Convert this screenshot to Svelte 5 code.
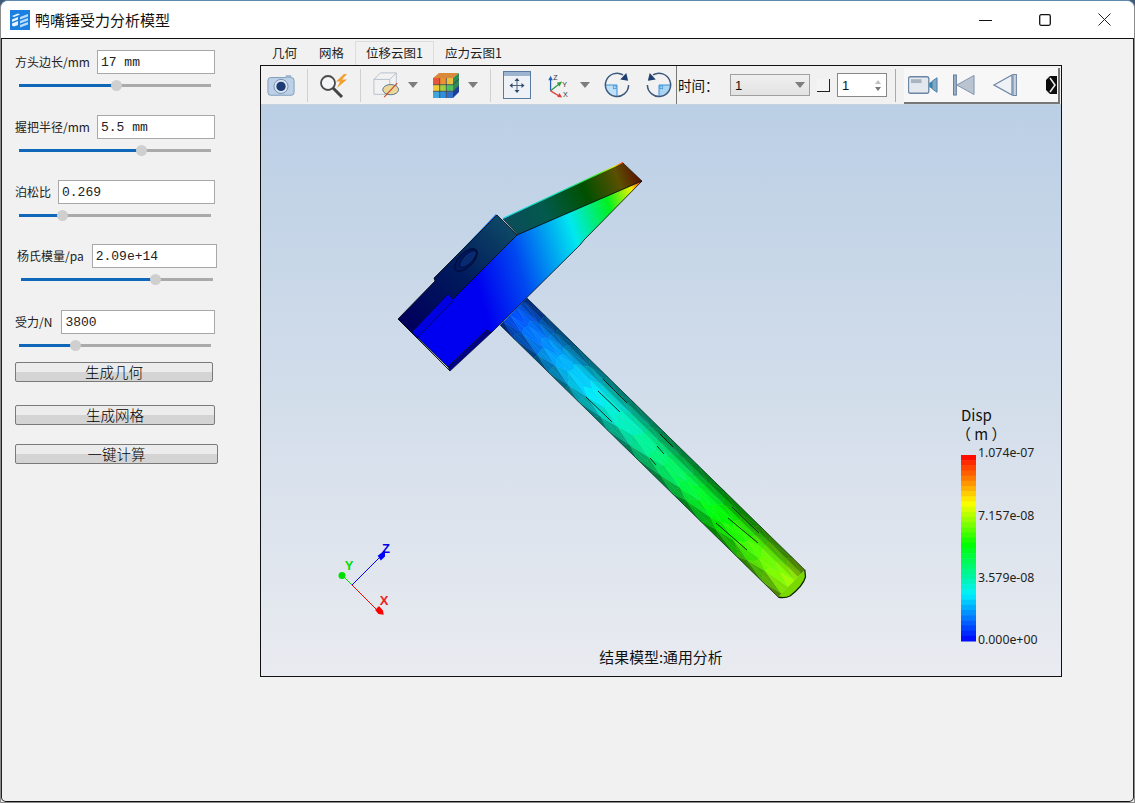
<script lang="ts">
	// colour ramp taken off the legend bar
	const ramp = [
		[0, [0, 0, 255]],
		[0.25, [0, 240, 255]],
		[0.52, [0, 255, 0]],
		[0.74, [255, 255, 0]],
		[1, [255, 0, 0]]
	] as const;

	function colorAt(v: number, shade = 1): string {
		const x = Math.min(1, Math.max(0, v));
		for (let i = 1; i < ramp.length; i++) {
			const [p1, c1] = ramp[i];
			const [p0, c0] = ramp[i - 1];
			if (x <= p1) {
				const k = (x - p0) / (p1 - p0);
				const rgb = c0.map((c, n) => Math.round((c + (c1[n] - c) * k) * shade));
				return `rgb(${rgb.join(',')})`;
			}
		}
		return 'rgb(255,0,0)';
	}

	const fields = [
		{ label: '方头边长/mm', value: '17 mm', pct: 50.5, cls: 'f1' },
		{ label: '握把半径/mm', value: '5.5 mm', pct: 63.5, cls: 'f2' },
		{ label: '泊松比', value: '0.269', pct: 22.5, cls: 'f3' },
		{ label: '杨氏模量/pa', value: '2.09e+14', pct: 70, cls: 'f4' },
		{ label: '受力/N', value: '3800', pct: 29, cls: 'f5' }
	];

	const tabs = ['几何', '网格', '位移云图1', '应力云图1'];

	const bands = Array.from({ length: 36 }, (_, i) => colorAt(1 - (i + 0.5) / 36));

	const legend = [
		{ y: 457, text: '1.074e-07' },
		{ y: 520, text: '7.157e-08' },
		{ y: 582, text: '3.579e-08' },
		{ y: 644, text: '0.000e+00' }
	];

	// handle mesh: triangles laid along the axis, shaded darker at the rims
	const A = { x: 513.5, y: 311.5 };
	const B = { x: 791.5, y: 583.5 };
	const halfW = 19;
	function rand(i: number, j: number): number {
		const s = Math.sin(i * 127.1 + j * 311.7) * 43758.5453;
		return s - Math.floor(s);
	}
	function meshPoint(i: number, j: number, cols: number, rows: number) {
		const jitterS = i > 0 && i < cols ? (rand(i, j) - 0.5) * 0.035 : 0;
		const s = i / cols + jitterS;
		const t = j / rows;
		const w = (t * 2 - 1) * halfW;
		return {
			x: A.x + (B.x - A.x) * s + 0.7 * w,
			y: A.y + (B.y - A.y) * s - 0.715 * w,
			s,
			t
		};
	}
	function rimShade(rim: number): number {
		if (rim > 0.8) return 0.52;
		if (rim > 0.55) return 0.7;
		if (rim > 0.3) return 0.9;
		return 1;
	}
	function buildHandle() {
		const cols = 18;
		const rows = 8;
		const out: { points: string; fill: string }[] = [];
		for (let i = 0; i < cols; i++) {
			for (let j = 0; j < rows; j++) {
				const a = meshPoint(i, j, cols, rows);
				const b = meshPoint(i + 1, j, cols, rows);
				const c = meshPoint(i + 1, j + 1, cols, rows);
				const d = meshPoint(i, j + 1, cols, rows);
				const tris = (i + j) % 2 ? [[a, b, c], [a, c, d]] : [[a, b, d], [b, c, d]];
				tris.forEach((tri, n) => {
					const s = (tri[0].s + tri[1].s + tri[2].s) / 3;
					const t = (tri[0].t + tri[1].t + tri[2].t) / 3;
					const rim = Math.abs(t - 0.46) * 2;
					const shade = rimShade(rim) * (0.98 + rand(i + n, j) * 0.02);
					out.push({
						points: tri.map((p) => `${p.x.toFixed(1)},${p.y.toFixed(1)}`).join(' '),
						fill: colorAt(0.08 + s * 0.58 + (rand(i, j + n) - 0.5) * 0.012, shade)
					});
				});
			}
		}
		return out;
	}
	const facets = buildHandle();

	const cubeCells = [
		['#e8553a', '#f09030', '#e8c040'],
		['#f0c838', '#a0d040', '#50c060'],
		['#40a8d8', '#3090e0', '#3070c8']
	];
</script>

<div class="window">
	<header class="titlebar">
		<svg class="app-icon" width="20" height="20" viewBox="0 0 20 20">
			<rect width="20" height="20" fill="#1a7fe0" />
			<path d="M2 6 8 3.5 10 4.5 4 7ZM2 9.5 8 7V9.5L2 12ZM2 13.5 8 11V15L4 16.5 2 15.5Z" fill="#eaf4fd" />
			<path d="M10 7 18 4V6.5L10 9.5ZM10 11 18 8V10.5L10 13.5ZM10 15 18 12V14.5L10 17.5Z" fill="#b9dcf8" />
		</svg>
		<span class="title">鸭嘴锤受力分析模型</span>
		<div class="win-controls">
			<svg width="13" height="12" viewBox="0 0 13 12"><path d="M0 6.5H13" stroke="#111" stroke-width="1" /></svg>
			<svg width="12" height="12" viewBox="0 0 12 12"><rect x="0.7" y="0.7" width="10.6" height="10.6" rx="1.5" fill="none" stroke="#111" stroke-width="1.3" /></svg>
			<svg width="13" height="13" viewBox="0 0 13 13"><path d="M0.5 0.5 12.5 12.5M12.5 0.5 0.5 12.5" stroke="#222" stroke-width="1" /></svg>
		</div>
	</header>

	<main class="body">
		<aside class="panel">
			{#each fields as f}
				<section class="field {f.cls}">
					<div class="field-row">
						<label class="field-label" for={f.cls}>{f.label}</label>
						<input id={f.cls} class="field-input" value={f.value} readonly />
					</div>
					<div class="slider">
						<div class="slider-fill" style="width: {f.pct}%"></div>
						<div class="slider-thumb" style="left: {f.pct}%"></div>
					</div>
				</section>
			{/each}
			<button class="act a1">生成几何</button>
			<button class="act a2">生成网格</button>
			<button class="act a3">一键计算</button>
		</aside>

		<section class="workspace">
			<nav class="tabs">
				{#each tabs as t, i}
					<div class="tab" class:active={i === 2}>{t}</div>
				{/each}
			</nav>
			<div class="frame">
				<div class="toolbar">
					<svg class="tool" width="28" height="24" viewBox="0 0 30 24">
						<rect x="1" y="4" width="28" height="19" rx="3" fill="#bcd0e6" stroke="#7d9abb" />
						<rect x="20" y="1.5" width="6" height="3" fill="#9ab4d0" />
						<circle cx="15" cy="13.5" r="7.5" fill="#dfe8f2" stroke="#6f8db0" />
						<circle cx="15" cy="13.5" r="5" fill="#1e3d74" />
					</svg>
					<i class="sep s1"></i>
					<svg class="tool" width="28" height="26" viewBox="0 0 28 26">
						<circle cx="8" cy="11" r="7" fill="#f4f6f8" stroke="#4a4a4a" stroke-width="1.8" />
						<path d="M13 16 22 25" stroke="#444" stroke-width="3" />
						<path d="M24 2 16 9.5H20L17 16 27 7.5H22L27 2Z" fill="#f0a030" />
					</svg>
					<i class="sep s2"></i>
					<svg class="tool" width="27" height="28" viewBox="0 0 29 28">
						<path d="M1 8 8 1H25V17L18 24H1Z" fill="#f2f2f2" stroke="#b4bdc8" />
						<path d="M1 8H18V24M18 8 25 1" fill="none" stroke="#b4bdc8" />
						<ellipse cx="19" cy="19" rx="8.5" ry="5.5" fill="#ecd79a" stroke="#51708f" />
						<path d="M12 27 26 12" stroke="#c8502a" stroke-width="1.3" />
					</svg>
					<i class="caret c1"></i>
					<svg class="tool" width="28" height="28" viewBox="0 0 28 28">
						<path d="M7 2H27L21 7H1Z" fill="#d88a3a" />
						<path d="M21 7 27 2V8L21 13.7ZM21 13.7 27 8V14.5L21 20.3Z" fill="#2f8a5a" />
						<path d="M21 20.3 27 14.5V21L21 27Z" fill="#1c3f9a" />
						{#each cubeCells as row, r}
							{#each row as c, k}
								<rect x={1 + k * 6.67} y={7 + r * 6.67} width="6.67" height="6.67" fill={c} />
							{/each}
						{/each}
						<path d="M7.7 7V27M14.3 7V27M1 13.7H21M1 20.3H21M21 13.7 27 8M21 20.3 27 14.5" stroke="#36404a" stroke-width="0.8" fill="none" />
					</svg>
					<i class="caret c2"></i>
					<i class="sep s3"></i>
					<svg class="tool" width="28" height="28" viewBox="0 0 28 28">
						<rect x="0.5" y="0.5" width="27" height="27" fill="#eef2f7" stroke="#5a7aa0" />
						<rect x="1" y="1" width="26" height="4" fill="#9db4d0" />
						<path d="M14 8V21M7.5 14.5H20.5" stroke="#49637f" />
						<path d="M14 7 11.5 10H16.5ZM14 22 11.5 19H16.5ZM6.5 14.5 9.5 12V17ZM21.5 14.5 18.5 12V17Z" fill="#2f4a6a" />
					</svg>
					<svg class="tool t-axes" width="25" height="25" viewBox="0 0 28 28">
						<path d="M4 20V7" stroke="#2460b8" stroke-width="1.4" />
						<path d="M4 3 1.5 8H6.5Z" fill="#2460b8" />
						<path d="M4 20 14 12" stroke="#2f9a40" stroke-width="1.4" />
						<path d="M17 9.5 11 11 14 15Z" fill="#2f9a40" />
						<path d="M4 20 14 26" stroke="#e03c3c" stroke-width="1.4" />
						<path d="M17 27.5 11.5 27 14 22.5Z" fill="#e03c3c" />
						<text x="7" y="7.5" class="axis-mini">Z</text>
						<text x="17" y="15.5" class="axis-mini">Y</text>
						<text x="18" y="26.5" class="axis-mini">X</text>
					</svg>
					<i class="caret c3"></i>
					<svg class="tool" width="26" height="26" viewBox="0 0 28 28">
						<path d="M14 14V26.5A12.5 12.5 0 0 1 1.5 14Z" fill="#bfe0f6" />
						<path d="M1.5 14H14V26.5" stroke="#2f8bd8" fill="none" />
						<rect x="10" y="15" width="3" height="3" fill="none" stroke="#2f8bd8" stroke-width="0.7" />
						<path d="M20.5 3.2A12.5 12.5 0 1 0 26.5 14" fill="none" stroke="#3c587c" stroke-width="1.6" />
						<path d="M26 9.5 17.5 8 24 1Z" fill="#1f3f70" />
					</svg>
					<svg class="tool t-rot2" width="26" height="26" viewBox="0 0 28 28">
						<path d="M14 14V26.5A12.5 12.5 0 0 0 26.5 14Z" fill="#a9d4f2" />
						<path d="M26.5 14H14V26.5" stroke="#2f8bd8" fill="none" />
						<rect x="15" y="15" width="3" height="3" fill="none" stroke="#2f8bd8" stroke-width="0.7" />
						<path d="M7.5 3.2A12.5 12.5 0 1 1 1.5 14" fill="none" stroke="#3c587c" stroke-width="1.6" />
						<path d="M2 9.5 10.5 8 4 1Z" fill="#1f3f70" />
					</svg>
					<i class="divider"></i>
					<span class="time-label">时间：</span>
					<div class="combo">
						<span>1</span>
						<i class="combo-arrow"></i>
					</div>
					<i class="check"></i>
					<div class="spin">
						<span>1</span>
						<div class="spin-arrows"><i class="up"></i><i class="down"></i></div>
					</div>
					<i class="sep s4"></i>
					<div class="player">
						<svg width="30" height="20" viewBox="0 0 31 20">
							<rect x="0.5" y="1.5" width="21" height="17" rx="2" fill="#e3e8ee" stroke="#6d86a3" stroke-width="1.4" />
							<rect x="3" y="4" width="11" height="4" fill="#a9b4c0" />
							<path d="M22 8 25 6V14L22 12Z" fill="#2d86b5" />
							<path d="M25 6 30 2.5V17.5L25 14Z" fill="#7fa8c4" stroke="#4c7fa6" />
						</svg>
						<svg class="p-first" width="22" height="22" viewBox="0 0 23 22">
							<rect x="0.5" y="0.5" width="3" height="21" fill="#9db0c6" stroke="#5f7c9f" />
							<path d="M4 11 22 1V21Z" fill="#b9c4d0" stroke="#7d93ac" />
						</svg>
						<svg class="p-prev" width="24" height="22" viewBox="0 0 24 22">
							<path d="M1 11 19 1V21Z" fill="#eef1f5" stroke="#6d86a3" stroke-width="1.2" />
							<rect x="20" y="0.5" width="3.4" height="21" fill="#c9d3df" stroke="#6d86a3" />
						</svg>
						<svg class="p-more" width="11" height="18" viewBox="0 0 11 18">
							<rect width="11" height="18" fill="#0c0c0c" />
							<path d="M0 0H4L0 4ZM0 18H4L0 14Z" fill="#f0f0f0" />
							<path d="M4 2 9 9 4 16" fill="none" stroke="#e8e8e8" stroke-width="1.6" />
						</svg>
					</div>
				</div>

				<div class="viewport">
					<svg class="scene" width="800" height="571" viewBox="261 105 800 571">
						<defs>
							<linearGradient id="faceMain" gradientUnits="userSpaceOnUse" x1="480" y1="293" x2="660" y2="239">
								<stop offset="0" stop-color="#0000f0" />
								<stop offset="0.24" stop-color="#0048f0" />
								<stop offset="0.57" stop-color="#00e8f0" />
								<stop offset="0.79" stop-color="#00f020" />
								<stop offset="0.93" stop-color="#f0f000" />
								<stop offset="1" stop-color="#ff2000" />
							</linearGradient>
							<linearGradient id="faceTop" gradientUnits="userSpaceOnUse" x1="503" y1="225" x2="640" y2="170">
								<stop offset="0" stop-color="#0c4a5c" />
								<stop offset="0.3" stop-color="#025a4c" />
								<stop offset="0.6" stop-color="#005000" />
								<stop offset="0.84" stop-color="#5a5000" />
								<stop offset="1" stop-color="#5c0a00" />
							</linearGradient>
							<linearGradient id="topEdge" gradientUnits="userSpaceOnUse" x1="503" y1="219" x2="623" y2="163">
								<stop offset="0" stop-color="#00d8f0" />
								<stop offset="0.55" stop-color="#00e8a0" />
								<stop offset="0.8" stop-color="#40f000" />
								<stop offset="0.93" stop-color="#f0f000" />
								<stop offset="1" stop-color="#ff3000" />
							</linearGradient>
							<linearGradient id="faceSide" gradientUnits="userSpaceOnUse" x1="410" y1="325" x2="512" y2="225">
								<stop offset="0" stop-color="#00005c" />
								<stop offset="0.5" stop-color="#001a5c" />
								<stop offset="1" stop-color="#0e4a66" />
							</linearGradient>
						</defs>

						<!-- handle -->
						{#each facets as f}
							<polygon points={f.points} fill={f.fill} stroke={f.fill} stroke-width="0.4" />
						{/each}
						<path d="M804.8 569.9 805.5 577Q803 586 790 596 785 598.5 778.2 597.1" fill="#78d800" stroke="#102000" stroke-width="1.2" />
						<path d="M526.8 297.9 804.8 569.9M500.2 325.1 778.2 597.1" fill="none" stroke="#06201c" stroke-width="0.8" opacity="0.8" />
						<path d="M603 379 627 403M598 391 620 412M586 397 607 417 612 422M660 434 673 447M657 446 664 454M650 458 656 465M732 507 759 533M728 518 758 543M716 523 747 550"
							fill="none" stroke="#04140a" stroke-width="0.9" />

						<!-- head -->
						<polygon points="434,279 496,214 498,217 438,282" fill="#0a6ee0" />
						<polygon points="503,219 623,163 642,181 518,235" fill="url(#faceTop)" stroke="#08140c" stroke-width="0.6" />
						<path d="M503 218.5 623 162.5" stroke="url(#topEdge)" stroke-width="1.2" />
						<polygon points="517,235 642,181 584,240 580,245 491,333 487,330 448,367 412,332" fill="url(#faceMain)" stroke="#04080c" stroke-width="0.8" />
						<polygon points="398,319 435,281 434,278 497,215 517,235 416,336 411,332" fill="url(#faceSide)" stroke="#04080c" stroke-width="0.8" />
						<polygon points="412,332 448,294 454,300 417,338" fill="#0000e0" stroke="#020a30" stroke-width="0.7" />
						<polygon points="487,330 491,333 450,371 448,367" fill="#000088" stroke="#04080c" stroke-width="0.6" />
						<path d="M398 319 450 371" fill="none" stroke="#04080c" stroke-width="0.9" />
						<ellipse cx="466" cy="260" rx="14.5" ry="7" transform="rotate(-45 466 260)" fill="#02185e" stroke="#01062a" stroke-width="0.9" />
						<ellipse cx="468" cy="259" rx="11" ry="4.5" transform="rotate(-45 468 259)" fill="#072a70" stroke="#01062a" stroke-width="0.7" />

						<!-- triad -->
						<path d="M352 585 382 555" stroke="#0000ff" stroke-width="1" />
						<path d="M352 585 342 575" stroke="#00e000" stroke-width="1" />
						<path d="M352 585 377 610" stroke="#ff0000" stroke-width="1" />
						<circle cx="342" cy="575.5" r="3.5" fill="#00e000" />
						<path d="M379 556 384 552 384 556 381 559Z" fill="#0000ff" stroke="#0000ff" stroke-width="2" />
						<path d="M376.5 610 379 607.5 382 611 382.5 613.5 379 613Z" fill="#ff0000" stroke="#ff0000" stroke-width="2" />
						<text x="349" y="570" class="triad" fill="#00e000" text-anchor="middle">Y</text>
						<text x="386" y="553" class="triad" fill="#0000e8" text-anchor="middle">Z</text>
						<text x="384" y="605" class="triad" fill="#f02020" text-anchor="middle">X</text>

						<!-- legend -->
						<text x="961" y="421" class="legend-title">Disp</text>
						<text x="956" y="440" class="legend-title">（ m ）</text>
						{#each bands as c, i}
							<rect x="961" y={455 + i * (186 / 36)} width="15" height={186 / 36 + 0.5} fill={c} />
						{/each}
						{#each legend as l}
							<text x="978" y={l.y} class="legend-val">{l.text}</text>
						{/each}

						<text x="661" y="663" class="caption" text-anchor="middle">结果模型:通用分析</text>
					</svg>
				</div>
			</div>
		</section>
	</main>
</div>

<style>
	:global(body) {
		background: #3f5a78;
		overflow: hidden;
	}

	.window {
		width: 1135px;
		height: 803px;
		box-sizing: border-box;
		border-top: 1px solid #5f88ae;
		border-left: 1px solid #8c8c8c;
		border-right: 1px solid #8c8c8c;
		border-bottom: 1px solid #8c8c8c;
		border-radius: 8px 8px 0 0;
		display: flex;
		flex-direction: column;
		overflow: hidden;
		background: #f1f1f1;
		font-family: 'Noto Sans CJK SC', 'Noto Sans', sans-serif;
		color: #111;
	}

	.titlebar {
		height: 37px;
		flex-shrink: 0;
		background: #fff;
		border-bottom: 1px solid #111;
		display: flex;
		align-items: center;
		padding-left: 9px;
	}

	.app-icon {
		margin-right: 5px;
	}

	.title {
		font-size: 15px;
	}

	.win-controls {
		margin-left: auto;
		display: flex;
		align-items: center;
		margin-right: 23px;
		gap: 47px;
	}

	.body {
		flex: 1;
		display: flex;
		box-sizing: border-box;
		border-left: 1px solid #222;
		border-right: 1px solid #222;
		border-bottom: 1px solid #111;
		border-radius: 0 0 5px 5px;
	}

	.panel {
		width: 258px;
		flex-shrink: 0;
		box-sizing: border-box;
		padding: 11px 0 0 13px;
		display: flex;
		flex-direction: column;
		align-items: flex-start;
	}

	.field {
		width: 200px;
		height: 65px;
	}

	.field.f3 {
		height: 64px;
	}

	.field.f4 {
		height: 66px;
		padding-left: 2px;
	}

	.field.f5 {
		height: 52px;
	}

	.field-row {
		display: flex;
		align-items: center;
		height: 24px;
	}

	.field-label {
		font-size: 12px;
		white-space: nowrap;
		color: #222;
		padding-bottom: 2px;
	}

	.field-input {
		flex: 1;
		min-width: 0;
		box-sizing: border-box;
		height: 24px;
		margin-left: 7px;
		padding: 0 3px;
		background: #fff;
		border: 1px solid #a8a8a8;
		border-radius: 0;
		outline: none;
		font-family: 'Liberation Mono', 'Noto Sans CJK SC', monospace;
		font-size: 13px;
		color: #222;
	}

	.f4 .field-input {
		margin-left: 8px;
	}

	.f5 .field-input {
		margin-left: 9px;
	}

	.slider {
		position: relative;
		width: 192px;
		height: 3px;
		margin: 10px 0 0 4px;
		background: #aaa;
	}

	.slider-fill {
		height: 3px;
		background: #0f67b8;
	}

	.slider-thumb {
		position: absolute;
		top: -4px;
		width: 11px;
		height: 11px;
		margin-left: -5px;
		border-radius: 50%;
		background: #cfcfcf;
	}

	.act {
		box-sizing: border-box;
		height: 20px;
		padding: 0 0 2px;
		border: 1px solid #7a7a7a;
		border-radius: 2px;
		background: linear-gradient(#ececec 0 50%, #d4d4d4 50% 100%);
		font-family: 'Noto Sans CJK SC', sans-serif;
		font-size: 14.5px;
		line-height: 15px;
		font-weight: 300;
		color: #000;
	}

	.a1 {
		width: 198px;
		margin-bottom: 23px;
	}

	.a2 {
		width: 200px;
		margin-bottom: 19px;
	}

	.a3 {
		width: 203px;
	}

	.workspace {
		display: flex;
		flex-direction: column;
		padding-top: 2px;
	}

	.tabs {
		display: flex;
		height: 24px;
		padding-left: 1px;
		box-sizing: border-box;
		font-size: 12.5px;
	}

	.tab {
		padding: 3px 11px 0;
		white-space: nowrap;
		color: #222;
		line-height: 18px;
	}

	.tab.active {
		background: #f1f1f1;
		border: 1px solid #dcdcdc;
		border-bottom: 0;
		padding: 2px 10px 0;
	}

	.frame {
		width: 802px;
		height: 612px;
		box-sizing: border-box;
		border: 1px solid #111;
		display: flex;
		flex-direction: column;
	}

	.toolbar {
		height: 39px;
		flex-shrink: 0;
		display: flex;
		align-items: center;
		background: #f1f1f1;
		border-bottom: 1px solid #c8d2de;
		box-sizing: border-box;
		padding-left: 6px;
	}

	.tool {
		flex-shrink: 0;
	}

	.sep {
		flex-shrink: 0;
		width: 1px;
		height: 33px;
		background: #d0d0d0;
	}

	.s1,
	.s2,
	.s3 {
		margin: 0 12px;
	}

	.s4 {
		margin: 0 8px;
		background: #aaa;
	}

	.caret {
		flex-shrink: 0;
		width: 0;
		height: 0;
		border-left: 5px solid transparent;
		border-right: 5px solid transparent;
		border-top: 6px solid #7d7d7d;
		margin-left: 8px;
	}

	.c1,
	.c3 {
		margin-right: 14px;
	}

	.t-axes {
		margin-left: 16px;
	}

	.t-rot2 {
		margin-left: 16px;
	}

	.axis-mini {
		font-family: 'Liberation Sans', sans-serif;
		font-size: 8px;
		fill: #333;
	}

	.divider {
		flex-shrink: 0;
		width: 1px;
		align-self: stretch;
		margin-left: 4px;
		background: #777;
	}

	.time-label {
		margin-left: 1px;
		width: 52px;
		flex-shrink: 0;
		font-size: 13.5px;
		white-space: nowrap;
	}

	.combo {
		flex-shrink: 0;
		box-sizing: border-box;
		width: 80px;
		height: 22px;
		border: 1px solid #a0a0a0;
		background: linear-gradient(#f0f0f0, #e2e2e2);
		display: flex;
		align-items: center;
		justify-content: space-between;
		padding: 0 4px;
		font-family: 'Liberation Sans', sans-serif;
		font-size: 13px;
	}

	.combo-arrow {
		border-left: 5px solid transparent;
		border-right: 5px solid transparent;
		border-top: 6px solid #7d7d7d;
	}

	.check {
		flex-shrink: 0;
		box-sizing: border-box;
		width: 13px;
		height: 13px;
		margin: 0 7px;
		background: #f4f4f4;
		border-right: 1px solid #222;
		border-bottom: 1px solid #222;
	}

	.spin {
		flex-shrink: 0;
		box-sizing: border-box;
		width: 50px;
		height: 24px;
		background: #fff;
		border: 1px solid #888;
		display: flex;
		align-items: center;
		justify-content: space-between;
		padding: 0 5px 0 4px;
		font-family: 'Liberation Sans', sans-serif;
		font-size: 13px;
	}

	.spin-arrows {
		display: flex;
		flex-direction: column;
		gap: 3px;
	}

	.spin-arrows i {
		width: 0;
		height: 0;
		border-left: 3.5px solid transparent;
		border-right: 3.5px solid transparent;
	}

	.spin-arrows .up {
		border-bottom: 4px solid #c0c0c0;
	}

	.spin-arrows .down {
		border-top: 4px solid #777;
	}

	.player {
		flex-shrink: 0;
		box-sizing: border-box;
		width: 156px;
		height: 36px;
		margin-top: 2px;
		background: #f7f7f7;
		border-right: 2px solid #777;
		border-bottom: 2px solid #777;
		display: flex;
		align-items: center;
		padding-left: 4px;
	}

	.p-first {
		margin-left: 15px;
	}

	.p-prev {
		margin-left: 18px;
	}

	.p-more {
		margin-left: 29px;
	}

	.viewport {
		flex: 1;
		position: relative;
		background: linear-gradient(#bbcfe5, #e9ebf0);
		overflow: hidden;
	}

	.scene {
		display: block;
		position: absolute;
		left: 0;
		top: 0;
	}

	.triad {
		font-family: 'Liberation Sans', sans-serif;
		font-size: 13px;
		font-weight: 700;
	}

	.legend-title {
		font-family: 'Noto Sans CJK SC', 'Noto Sans', sans-serif;
		font-size: 15px;
		fill: #111;
	}

	.legend-val {
		font-family: 'Noto Sans', 'Liberation Sans', sans-serif;
		font-size: 12.3px;
		fill: #222;
	}

	.caption {
		font-family: 'Noto Sans CJK SC', sans-serif;
		font-size: 14.9px;
		fill: #111;
	}
</style>
